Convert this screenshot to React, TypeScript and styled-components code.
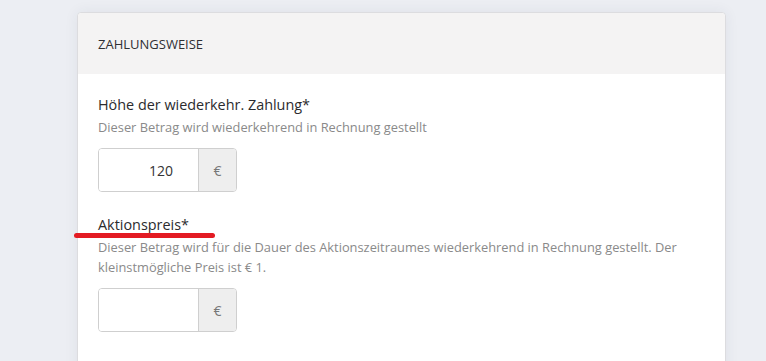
import styled, { createGlobalStyle } from 'styled-components';

const GlobalStyle = createGlobalStyle`
  html, body {
    margin: 0;
    padding: 0;
    background: #eceef3;
    font-family: "Open Sans", "Liberation Sans", sans-serif;
    overflow: hidden;
  }
`;

const Page = styled.div`
  padding: 12px 40px 0 77px;
  height: 361px;
  box-sizing: border-box;
`;

const Card = styled.section`
  width: 649px;
  background: #fff;
  border: 1px solid #dcdcdf;
  border-radius: 4px;
  box-shadow: 0 0 14px rgba(40, 50, 80, 0.07);
  box-sizing: border-box;
`;

const CardHeader = styled.header`
  height: 61px;
  display: flex;
  align-items: center;
  padding: 0 20px;
  background: #f4f3f3;
  border-radius: 4px 4px 0 0;
`;

const CardTitle = styled.h2`
  margin: 0;
  font-size: 13px;
  font-weight: 400;
  color: #2f2f33;
`;

const CardBody = styled.div`
  padding: 20px 20px 40px;
  display: flex;
  flex-direction: column;
  gap: 22px;
`;

const Field = styled.div<{ $offset?: number }>`
  display: flex;
  flex-direction: column;
  margin-top: ${({ $offset }) => $offset ?? 0}px;
`;

const Label = styled.label`
  position: relative;
  font-size: 14.4px;
  line-height: 22px;
  color: #2b2b2e;
  margin-bottom: 1px;
`;

const Marker = styled.span`
  position: absolute;
  left: -24px;
  top: 19px;
  width: 141px;
  height: 5px;
  border-radius: 3px;
  background: #e31b23;
`;

const Hint = styled.p`
  margin: 0;
  font-size: 12.85px;
  line-height: 20px;
  color: #8a8a8a;
`;

const InputGroup = styled.div`
  margin-top: 11px;
  display: flex;
  width: 139px;
  height: 44px;
  border: 1px solid #cfcfcf;
  border-radius: 4px;
  box-sizing: border-box;
  overflow: hidden;
`;

const Input = styled.input`
  width: 99px;
  border: 0;
  outline: none;
  padding: 0 25px 0 8px;
  box-sizing: border-box;
  text-align: right;
  font-family: inherit;
  font-size: 14px;
  color: #333;
  background: #fff;
`;

const Addon = styled.span`
  flex: 1;
  display: flex;
  align-items: center;
  justify-content: center;
  background: #eee;
  border-left: 1px solid #cfcfcf;
  font-size: 14px;
  color: #777;
`;

type PriceFieldProps = {
  label: string;
  hint: string;
  value?: string;
  marked?: boolean;
};

function PriceField({ label, hint, value, marked }: PriceFieldProps) {
  return (
    <Field>
      <Label>
        {label}
        {marked && <Marker />}
      </Label>
      <Hint>{hint}</Hint>
      <InputGroup>
        <Input defaultValue={value} />
        <Addon>€</Addon>
      </InputGroup>
    </Field>
  );
}

export default function App() {
  return (
    <>
      <GlobalStyle />
      <Page>
        <Card>
          <CardHeader>
            <CardTitle>ZAHLUNGSWEISE</CardTitle>
          </CardHeader>
          <CardBody>
            <PriceField
              label="Höhe der wiederkehr. Zahlung*"
              hint="Dieser Betrag wird wiederkehrend in Rechnung gestellt"
              value="120"
            />
            <PriceField
              label="Aktionspreis*"
              hint="Dieser Betrag wird für die Dauer des Aktionszeitraumes wiederkehrend in Rechnung gestellt. Der kleinstmögliche Preis ist € 1."
              marked
            />
            <Field $offset={4}>
              <Label>Dauer des Aktionszeitraumes*</Label>
            </Field>
          </CardBody>
        </Card>
      </Page>
    </>
  );
}
